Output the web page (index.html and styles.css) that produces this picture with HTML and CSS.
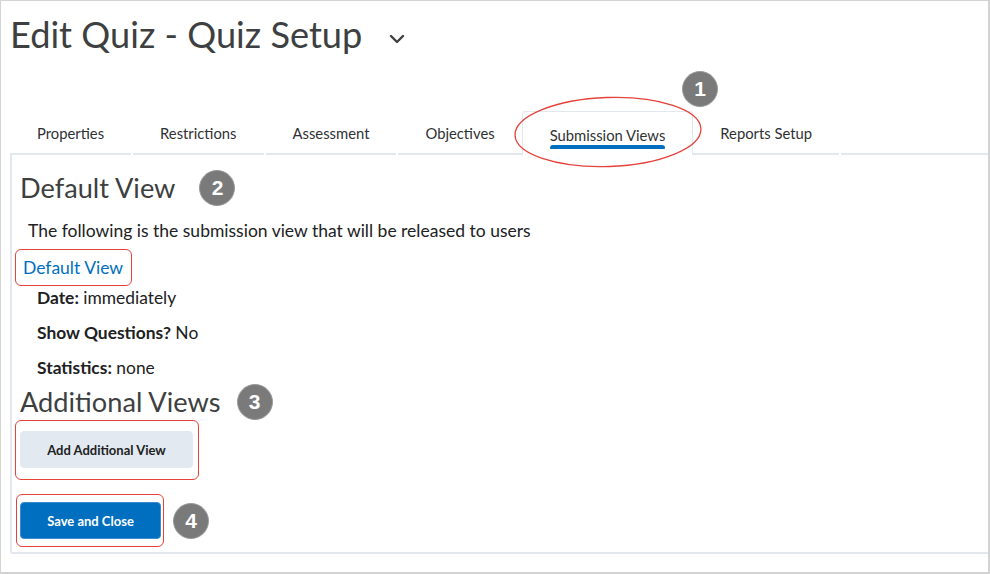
FILE: index.html
```html
<!DOCTYPE html>
<html lang="en">
<head>
<meta charset="utf-8">
<title>Edit Quiz - Quiz Setup</title>
<link rel="stylesheet" href="styles.css">
</head>
<body>
<div class="frame">
  <header class="title-row">
    <h1 class="title">Edit Quiz - Quiz Setup</h1>
    <svg class="chevron" width="16" height="10" viewBox="0 0 16 10" aria-hidden="true"><path d="M2 2 L8 8 L14 2" fill="none" stroke="#3d3f41" stroke-width="2.4" stroke-linecap="round" stroke-linejoin="round"/></svg>
  </header>

  <div class="tabs-area">
    <nav class="tabs">
      <div class="tab">Properties</div>
      <div class="tab">Restrictions</div>
      <div class="tab">Assessment</div>
      <div class="tab">Objectives</div>
      <div class="tab tab-active">Submission Views<span class="indicator"></span></div>
      <div class="tab">Reports Setup</div>
    </nav>
    <svg class="ellipse" width="192" height="74" viewBox="0 0 192 74" aria-hidden="true"><ellipse cx="96" cy="37" rx="93" ry="34.5" fill="none" stroke="#e5423a" stroke-width="1.3" transform="rotate(-2 96 37)"/></svg>
    <span class="badge badge-tab">1</span>
  </div>

  <section class="panel">
    <div class="heading-row first">
      <h2 class="heading">Default View</h2>
      <span class="badge">2</span>
    </div>
    <p class="intro">The following is the submission view that will be released to users</p>
    <div class="mark mark-link"><a class="link" href="#">Default View</a></div>
    <div class="details">
      <p class="detail"><b>Date:</b> immediately</p>
      <p class="detail"><b>Show Questions?</b> No</p>
      <p class="detail"><b>Statistics:</b> none</p>
    </div>
    <div class="heading-row second">
      <h2 class="heading">Additional Views</h2>
      <span class="badge">3</span>
    </div>
    <div class="mark mark-add"><button class="btn btn-secondary" type="button">Add Additional View</button></div>
    <div class="save-row">
      <div class="mark mark-save"><button class="btn btn-primary" type="button">Save and Close</button></div>
      <span class="badge">4</span>
    </div>
  </section>
</div>
</body>
</html>
```

FILE: styles.css
```css
* { box-sizing: border-box; }

html, body {
  margin: 0;
  padding: 0;
  background: #ffffff;
}

body {
  font-family: Lato, "Noto Sans", "Liberation Sans", sans-serif;
  color: #202122;
}

.frame {
  width: 990px;
  height: 574px;
  border: 1px solid #d3d3d3;
  border-right-width: 2px;
  border-bottom-width: 2px;
  padding: 0 0 0 9px;
  overflow: hidden;
}

.title-row {
  display: flex;
  align-items: center;
  gap: 27px;
  height: 44px;
  margin-top: 11px;
}

.title {
  margin: 0;
  font-size: 36.2px;
  font-weight: 400;
  line-height: 44px;
  color: #3d3f41;
}

.chevron {
  margin-top: 10px;
}

.tabs-area {
  position: relative;
  margin-top: 55px;
}

.tabs {
  display: flex;
  align-items: flex-end;
  height: 44px;
  border-bottom: 2px solid #e3e8ee;
}

.tab {
  position: relative;
  height: 44px;
  padding: 4px 27px 0;
  margin-right: 2px;
  font-size: 14.8px;
  line-height: 40px;
  color: #2f3133;
  white-space: nowrap;
}

.tab::after {
  content: "";
  position: absolute;
  right: -2px;
  bottom: -2px;
  width: 2px;
  height: 2px;
  background: #ffffff;
}

.tab-active {
  margin-left: -2px;
  margin-right: 0;
  margin-bottom: -2px;
  height: 44px;
  border: 1px solid #e3e8ee;
  border-bottom: none;
  border-radius: 3px 3px 0 0;
  background: #ffffff;
  padding: 3px 27px 0;
  line-height: 40px;
}

.tab-active::after { display: none; }

.indicator {
  position: absolute;
  left: 27px;
  right: 27px;
  bottom: 6px;
  height: 4px;
  border-radius: 3px 3px 1px 1px;
  background: #006fbf;
}

.ellipse {
  position: absolute;
  left: 502px;
  top: -16px;
  pointer-events: none;
}

.badge {
  display: inline-flex;
  align-items: center;
  justify-content: center;
  width: 36px;
  height: 36px;
  border-radius: 50%;
  background: #7a7a7a;
  border: 1px solid #9b9b9b;
  color: #ffffff;
  font-family: "Liberation Sans", Arial, sans-serif;
  font-weight: 700;
  font-size: 21px;
  flex: none;
}

.badge-tab {
  position: absolute;
  left: 672px;
  top: -40px;
}

.panel {
  border-left: 2px solid #e3e8ee;
  border-bottom: 2px solid #e3e8ee;
  border-bottom-left-radius: 3px;
  padding: 15px 0 5px 3px;
}

.heading-row {
  display: flex;
  align-items: center;
  gap: 24px;
  height: 36px;
  margin-left: 5px;
}

.heading-row.second { margin-top: 4px; gap: 16px; }

.heading {
  margin: 0;
  font-size: 27.2px;
  font-weight: 400;
  line-height: 36px;
  color: #3d3f41;
}

.intro {
  margin: 13px 0 0 13px;
  font-size: 17.5px;
  line-height: 24px;
}

.mark {
  display: inline-block;
  border: 1.3px solid #e5423a;
  border-radius: 6px;
}

.mark-link {
  margin-top: 6px;
  height: 37px;
  padding: 0 8px 0 7px;
  line-height: 35px;
}

.link {
  color: #006fbf;
  text-decoration: none;
  font-size: 17.5px;
}

.details {
  margin-left: 22px;
}

.detail {
  margin: 0 0 11px 0;
  font-size: 17.4px;
  line-height: 24px;
}

.detail b { font-weight: 700; }

.details .detail:last-child { margin-bottom: 0; }

.mark-add {
  display: block;
  width: 184px;
  height: 60px;
  padding: 10px 5px 0 4px;
}

.btn {
  display: block;
  border-radius: 4px;
  font-family: Lato, "Noto Sans", "Liberation Sans", sans-serif;
  font-weight: 700;
  font-size: 13px;
  height: 37px;
  cursor: pointer;
}

.btn-secondary {
  width: 173px;
  background: #e3e9f1;
  border: 1px solid #e3e9f1;
  color: #202122;
}

.save-row {
  display: flex;
  align-items: center;
  gap: 9px;
  margin-top: 14px;
}

.mark-save {
  width: 148px;
  height: 53px;
  margin-left: 1px;
  padding: 7px 3px 0 3px;
}

.btn-primary {
  width: 141px;
  background: #006fbf;
  border: 1px solid #3a8bd0;
  color: #ffffff;
}
```
